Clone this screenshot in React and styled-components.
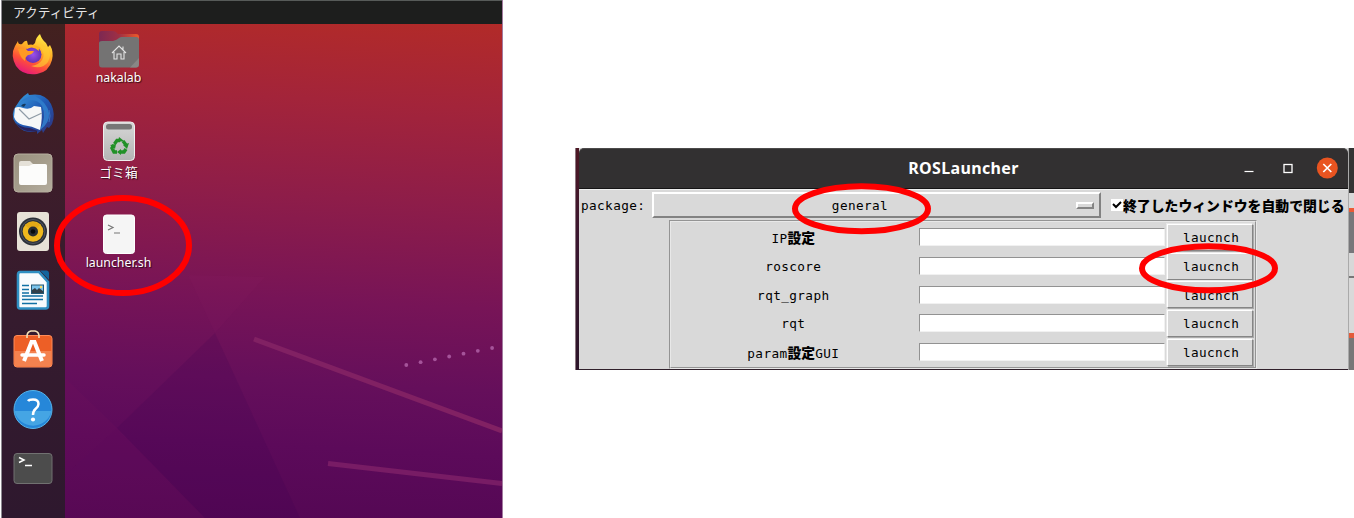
import React from "react";
import styled, { createGlobalStyle } from "styled-components";

const Global = createGlobalStyle`
  * { box-sizing: border-box; }
  body { margin: 0; background: #fff; overflow: hidden; }
`;

const Page = styled.main`
  position: relative;
  width: 1354px;
  height: 518px;
  display: flex;
  align-items: flex-start;
  padding-left: 2px;
  overflow: hidden;
  background: #fff;
`;

const Desktop = styled.section`
  position: relative;
  width: 502px;
  height: 518px;
  margin-left: -1px;
  border-left: 1px solid #8d8a91;
  border-right: 1px solid #a27a9f;
  display: flex;
  flex-direction: column;
  background: linear-gradient(183deg, #b32b27 3%, #a3243a 20%, #8e1d49 38%, #771457 57%, #650f5b 72%, #5c0a5a 84%, #530753 100%);
`;

const Wallpaper = styled.svg`
  position: absolute;
  left: 0;
  top: 0;
`;

const TopBar = styled.header`
  position: relative;
  height: 24px;
  border-top: 1px solid #575b59;
  background: #1d1e1d;
  color: #e4e4e4;
  padding: 2px 0 0 11px;
  font: 12.7px/18px "Noto Sans CJK JP", sans-serif;
  letter-spacing: 0;
`;

const Workspace = styled.div`
  position: relative;
  flex: 1;
  display: flex;
`;

const Dock = styled.nav`
  width: 63px;
  display: flex;
  flex-direction: column;
  align-items: center;
  padding: 8.6px 1px 0 0;
  gap: 15.2px;
  background: linear-gradient(#43211f, #3d1d2a 30%, #351b2e 60%, #2e182e);
`;

const DockIcon = styled.svg`
  width: 44px;
  height: 44px;
  flex: none;
  overflow: visible;
`;

const Icons = styled.div`
  width: 107px;
  display: flex;
  flex-direction: column;
  padding-top: 4px;
`;

const DesktopItem = styled.div`
  height: 92.4px;
  display: flex;
  flex-direction: column;
  align-items: center;
  color: #fff;
  text-shadow: 1px 1px 1px #000a;
  font: ${(p) => p.$size || 12.3}px/16px "Noto Sans", "Noto Sans CJK JP", sans-serif;
  white-space: nowrap;
  svg { width: 44px; height: 42px; margin-bottom: ${(p) => p.$gap ?? 0}px; overflow: visible; }
`;

const Capture = styled.section`
  width: 779px;
  height: 222px;
  margin: 148px 0 0 72px;
  display: flex;
  background: #30202b;
`;

const LeftEdge = styled.div`
  width: 4px;
  border-left: 1px solid #8b7780;
  background: linear-gradient(#4d1824, #3b1730 40%, #2d152a);
`;

const Launcher = styled.div`
  width: 769px;
  height: 221px;
  display: flex;
  flex-direction: column;
  background: #d9d9d9;
  font: 12.7px/16px "DejaVu Sans Mono", "Noto Sans CJK JP", monospace;
  letter-spacing: 0.4px;
  color: #000;
`;

const RightEdge = styled.div`
  width: 6px;
  border-left: 1px solid #aaa;
  background: linear-gradient(#343434 0 45px, #d9d9d9 45px 60px, #ec5a35 60px 64px, #77777a 64px 105px, #d8d8d8 105px 128px, #777 128px 130px, #d9d9d9 130px 185px, #e35b3a 185px 190px, #777 190px);
`;

const TitleBar = styled.header`
  height: 41px;
  flex: none;
  display: grid;
  grid-template-columns: 1fr 111px 1fr;
  align-items: center;
  background: #323031;
  border-top: 1px solid #4c4a4b;
  border-bottom: 1px solid #151415;
  border-radius: 5px 5px 0 0;
  color: #fff;
`;

const Title = styled.h1`
  grid-column: 2;
  margin: 0 0 1px;
  text-align: center;
  white-space: nowrap;
  font: bold 16px/22px "Noto Sans", sans-serif;
  letter-spacing: 0.35px;
`;

const WindowControls = styled.svg`
  width: 110px;
  height: 36px;
  justify-self: end;
  margin-bottom: 2px;
`;

const PackageRow = styled.div`
  display: flex;
  height: 31px;
  padding: 2px 2px 0 2px;
  border-top: 1px solid #efefef;
`;

const PackageLabel = styled.span`
  width: 71px;
  padding-top: 6px;
`;

const OptionMenu = styled.button`
  width: 449px;
  height: 26px;
  display: flex;
  align-items: center;
  padding: 1px 5px 0 31px;
  color: #000;
  background: #d9d9d9;
  border: 2px solid;
  border-color: #fff #828282 #828282 #fff;
  border-radius: 0;
  font: inherit;
  letter-spacing: inherit;
  span { flex: 1; text-align: center; margin-right: 41px; }
`;

const MenuIndicator = styled.i`
  width: 18px;
  height: 7px;
  border: 2px solid;
  border-color: #fff #858585 #858585 #fff;
`;

const CheckLabel = styled.label`
  display: flex;
  align-items: center;
  height: 26px;
  margin-left: 10px;
  font: 900 13.85px/18px "Noto Sans CJK JP", sans-serif;
  letter-spacing: 0;
  white-space: nowrap;
  svg { width: 12px; height: 12px; flex: none; }
`;

const Frame = styled.div`
  width: 588px;
  height: 149px;
  margin-left: 90px;
  padding: 1px 2px 0 2px;
  border: 2px groove #e8e8e8;
`;

const Row = styled.div`
  display: flex;
  align-items: center;
  height: 28.7px;
`;

const RowLabel = styled.span`
  width: 246px;
  padding: 2px 5px 0 0;
  text-align: center;
  white-space: nowrap;
  b { font: 900 13.8px/16px "Noto Sans CJK JP", sans-serif; letter-spacing: 0; }
`;

const Entry = styled.input`
  width: 247px;
  height: 18px;
  padding: 0;
  border: 1px solid;
  border-color: #929292 #f1f1f1 #f1f1f1 #929292;
  border-radius: 0;
  background: #fff;
  outline: none;
`;

const LaunchButton = styled.button`
  width: 86px;
  height: 27px;
  margin-left: 2px;
  padding: 2px 0 0 2px;
  color: #000;
  background: #d9d9d9;
  border: 1px solid;
  border-color: #fff #858585 #858585 #fff;
  border-radius: 0;
  box-shadow: 1px 1px #aaa, -1px -1px #e9e9e9;
  font: inherit;
  letter-spacing: inherit;
`;

const Highlights = styled.svg`
  position: absolute;
  left: 0;
  top: 0;
  pointer-events: none;
`;

const Firefox = () => (
  <DockIcon viewBox="0 0 44 44">
    <defs>
      <linearGradient id="ff" x1=".75" y1="0" x2=".3" y2="1"><stop stopColor="#fff24a" /><stop offset=".4" stopColor="#ffad25" /><stop offset=".7" stopColor="#ff5038" /><stop offset="1" stopColor="#e41580" /></linearGradient>
      <radialGradient id="globe"><stop stopColor="#9d50ed" /><stop offset="1" stopColor="#6532b6" /></radialGradient>
    </defs>
    <path d="M7 8Q7 12 11 11Q14 7 16 8L17 12Q21 14 24 10Q25 4 29 1Q31 7 35 10L37 14L39 12Q43 19 41 27Q38 39 26 41Q12 43 5 33Q-1 22 4 13Z" fill="url(#ff)" />
    <circle cx="22" cy="21.5" r="8.5" fill="url(#globe)" />
    <path d="M7 16Q14 14 17 18L23 18Q21 22 17 22Q14 24 14 28Q9 24 8 19Z" fill="#ff9a24" />
    <path d="M16 12Q23 10 30 15Q27 15 28 18Q22 12 16 16Z" fill="#ffb01f" />
    <path d="M29 14Q35 21 31 27Q28 32 20 33Q31 37 37 29Q41 21 37 15L34 11Q36 17 29 11Z" fill="#ffcd32" opacity=".65" />
  </DockIcon>
);

const Thunderbird = () => (
  <DockIcon viewBox="0 0 44 44">
    <defs><linearGradient id="tb" x1="0" y1="0" x2="1" y2="1"><stop stopColor="#3ca4e3" /><stop offset=".5" stopColor="#205ab5" /><stop offset="1" stopColor="#303079" /></linearGradient></defs>
    <path d="M9 8Q12 4 17 1L18 3Q34 0 40 12Q45 22 41 32L38 36L36 35L32 41L31 38L26 42L26 39Q14 42 8 35Q-1 27 3 17Z" fill="url(#tb)" />
    <path d="M4 16Q9 8 17 8Q27 7 31 14Q36 24 29 38Q39 31 38 21Q36 10 24 4Q12 4 4 16Z" fill="#2e7aca" />
    <path d="M4 16Q7 14 12 16Q19 18 23 14L30 15Q32 26 29 38Q21 34 12 33Q5 31 3 25Z" fill="#f6f7f7" />
    <path d="M8 17L18 27L31 21" fill="none" stroke="#8f9ba6" strokeWidth="1.2" />
    <path d="M3 28Q8 36 19 36L27 39Q15 41 8 35Z" fill="#29235e" />
    <path d="M34 19Q37 26 33 33M38 18Q40 24 38 30" fill="none" stroke="#3c72c2" />
    <path d="M10 14Q12 11 15 12L13 15Z" fill="#153a5e" />
  </DockIcon>
);

const Files = () => (
  <DockIcon viewBox="0 0 44 44">
    <defs><linearGradient id="files" x1="0" y1="0" x2="1" y2="1"><stop stopColor="#9a917f" /><stop offset=".5" stopColor="#a59d8c" /><stop offset="1" stopColor="#b4ad9e" /></linearGradient></defs>
    <rect x="3" y="3" width="38" height="38" rx="4" fill="url(#files)" stroke="#b6af9f" />
    <path d="M8 12Q8 10 10 10H19L22 13H33Q36 13 36 15V18H8Z" fill="#e5e1d8" />
    <path d="M8 15H18L22 13H34Q36 13 36 15V32Q36 34 34 34H10Q8 34 8 32Z" fill="#fcfcfb" />
  </DockIcon>
);

const Rhythmbox = () => (
  <DockIcon viewBox="0 0 44 44">
    <rect x="6" y="2" width="32" height="39" rx="3" fill="#e7e2d7" />
    <circle cx="22" cy="21.5" r="14" fill="#2b3038" />
    <circle cx="22" cy="21.5" r="12" fill="none" stroke="#505661" />
    <circle cx="22" cy="21.5" r="10.3" fill="#efb91d" />
    <path d="M22 22L14 15Q22 8 29 15Z" fill="#d99d11" opacity=".55" />
    <circle cx="22" cy="21.5" r="5" fill="#292d32" />
    <circle cx="22" cy="21.5" r="2.3" fill="#080a0c" />
  </DockIcon>
);

const Writer = () => (
  <DockIcon viewBox="0 0 44 44">
    <path d="M9 3H28L37 13V37Q37 39.5 34.5 39.5H9Q7 39.5 7 37V6Q7 3 9 3Z" fill="#f8fbfd" stroke="#2f8fc2" strokeWidth="2.6" />
    <path d="M29 1.5H36Q38 2 38 4V11Z" fill="#13659d" />
    <path d="M11 16.5H18M11 20.5H18M11 24H18M11 27H32M11 30.5H32M11 34.5H26" stroke="#1170a4" strokeWidth="1.6" />
    <rect x="20.5" y="16" width="12" height="8.5" fill="#7ac4ec" stroke="#245874" />
    <path d="M21 24V21L24 19L26 21L28 19L32 22V24Z" fill="#32404a" />
    <circle cx="30" cy="18" r="1.2" fill="#ffdc65" />
  </DockIcon>
);

const Software = () => (
  <DockIcon viewBox="0 0 44 44">
    <rect x="3" y="6.5" width="38" height="31.5" rx="3" fill="#ed5f26" stroke="#ff8b58" />
    <path d="M3.5 22H40.5V35Q40.5 37.5 38 37.5H6Q3.5 37.5 3.5 35Z" fill="#f4824f" />
    <path d="M16 9V7Q16 3 20 2H24Q28 3 28 7V9" fill="none" stroke="#f3dfb5" strokeWidth="1.6" />
    <path d="M13 32L20.5 13H23.5L31 32" fill="none" stroke="#fff" strokeWidth="4" />
    <path d="M11 26H33" stroke="#fff" strokeWidth="3.5" strokeLinecap="round" />
  </DockIcon>
);

const Help = () => (
  <DockIcon viewBox="0 0 44 44">
    <circle cx="22" cy="21.5" r="19" fill="#2687d9" stroke="#56b5ec" />
    <path d="M3.5 23H40.5A19 19 0 0 1 3.5 23Z" fill="#45a5e4" />
    <path d="M17 13Q18 11.5 22 11.5Q27.5 11.5 27.5 16Q27.5 18.5 24.5 21Q22 23 22 27" fill="none" stroke="#fff" strokeWidth="2.5" />
    <circle cx="22" cy="31.5" r="2.1" fill="#fff" />
  </DockIcon>
);

const Terminal = () => (
  <DockIcon viewBox="0 0 44 44">
    <rect x="3" y="6.5" width="38" height="30" rx="3" fill="#4c4c4c" stroke="#717171" />
    <path d="M8 10.5L13 13L8 15.5M14 18.5H21" fill="none" stroke="#fff" strokeWidth="1.5" />
  </DockIcon>
);

const HomeFolder = () => (
  <svg viewBox="0 0 44 42">
    <defs><linearGradient id="folder"><stop stopColor="#7d2852" /><stop offset=".5" stopColor="#9e3045" /><stop offset="1" stopColor="#ef5a29" /></linearGradient></defs>
    <path d="M2 6Q2 3 5 3H16Q19 3 21 6H39Q42 6 42 9V17H2Z" fill="url(#folder)" />
    <path d="M2 15Q2 13 5 13H16Q20 12 22 10Q23 9 25 9H39Q42 9 42 12V36Q42 39.5 39 39.5H5Q2 39.5 2 36Z" fill="#747373" />
    <path d="M42 30L33 39.5H39Q42 39.5 42 36Z" fill="#898786" />
    <path d="M15 25L22 18L29 25M17 24V31H20V26H24V31H27V24M26 18.5V22" fill="none" stroke="#e3e3e3" strokeWidth="1.1" />
  </svg>
);

const Trash = () => (
  <svg viewBox="0 0 44 42">
    <defs><linearGradient id="trash" x1="0" y1="0" x2="0" y2="1"><stop stopColor="#d7d7d7" /><stop offset="1" stopColor="#b4b4b4" /></linearGradient></defs>
    <rect x="6.5" y="2" width="31" height="38.5" rx="4" fill="url(#trash)" stroke="#eee" />
    <rect x="9" y="4" width="26" height="5.5" rx="2.5" fill="#777" />
    <path d="M17.4 24L20 20.5H23M26 21L29 25M29 29L27 32H23M20 32H17L15 28L17 25" fill="none" stroke="#219127" strokeWidth="3.4" />
    <path d="M22 17L27 21L21 22ZM26 25L32 23L30 29ZM24 29V35L20 32ZM13 25L19 24L18 29Z" fill="#219127" />
  </svg>
);

const Script = () => (
  <svg viewBox="0 0 44 42">
    <rect x="6.5" y="2" width="31" height="38.5" rx="3" fill="#f5f5f5" stroke="#fff" />
    <path d="M11 12L16 14.5L11 17M17 20H23" fill="none" stroke="#777" strokeWidth="1.2" />
  </svg>
);

const rows = [
  <>IP<b>設定</b></>,
  "roscore",
  "rqt_graph",
  "rqt",
  <>param<b>設定</b>GUI</>,
];

export default function App() {
  return (
    <Page>
      <Global />
      <Desktop>
        <Wallpaper width="500" height="518" viewBox="2 0 500 518">
          <path d="M188 275L215 333L265 277Z" fill="#a03070" opacity=".07" />
          <path d="M215 333L117 428L205 518H300Z" fill="#39004f" opacity=".15" />
          <path d="M65 378L117 428L65 475Z" fill="#7b1660" opacity=".15" />
          <path d="M65 475L117 428L205 518H65Z" fill="#7b1660" opacity=".1" />
          <path d="M254 339L502 431" stroke="#812163" strokeWidth="5" />
          <path d="M328 463.5L502 483.5" stroke="#781c65" strokeWidth="5" />
          {Array.from({ length: 7 }, (_, i) => (
            <circle key={i} cx={406.3 + i * 14.3} cy={365 - i * 2.83} r="1.9" fill="#a5549a" />
          ))}
        </Wallpaper>
        <TopBar>アクティビティ</TopBar>
        <Workspace>
          <Dock>
            <Firefox /><Thunderbird /><Files /><Rhythmbox /><Writer /><Software /><Help /><Terminal />
          </Dock>
          <Icons>
            <DesktopItem><HomeFolder />nakalab</DesktopItem>
            <DesktopItem $size={12.8} $gap={2}><Trash />ゴミ箱</DesktopItem>
            <DesktopItem><Script />launcher.sh</DesktopItem>
          </Icons>
        </Workspace>
      </Desktop>
      <Capture>
        <LeftEdge />
        <Launcher>
          <TitleBar>
            <Title>ROSLauncher</Title>
            <WindowControls viewBox="0 0 110 36">
              <path d="M6.5 21.5H15.5" stroke="#fff" strokeWidth="1.2" />
              <rect x="46" y="14.5" width="8" height="8" fill="none" stroke="#fff" strokeWidth="1.3" />
              <circle cx="89.3" cy="18" r="10.5" fill="#e95420" />
              <path d="M85.3 14L93.3 22M93.3 14L85.3 22" stroke="#fff" strokeWidth="1.7" />
            </WindowControls>
          </TitleBar>
          <PackageRow>
            <PackageLabel>package:</PackageLabel>
            <OptionMenu><span>general</span><MenuIndicator /></OptionMenu>
            <CheckLabel>
              <svg viewBox="0 0 12 12"><rect width="12" height="12" fill="#fff" /><path d="M2 5L5 8L10 3" fill="none" stroke="#000" strokeWidth="2" /></svg>
              終了したウィンドウを自動で閉じる
            </CheckLabel>
          </PackageRow>
          <Frame>
            {rows.map((label, i) => (
              <Row key={i}>
                <RowLabel>{label}</RowLabel>
                <Entry aria-label="argument" />
                <LaunchButton>laucnch</LaunchButton>
              </Row>
            ))}
          </Frame>
        </Launcher>
        <RightEdge />
      </Capture>
      <Highlights width="1354" height="518" fill="none" stroke="#f00" strokeWidth="6">
        <ellipse cx="123" cy="245.5" rx="66" ry="47.5" />
        <ellipse cx="861.5" cy="208.8" rx="66.5" ry="22.5" />
        <ellipse cx="1208.5" cy="268.3" rx="66.5" ry="22" />
      </Highlights>
    </Page>
  );
}
